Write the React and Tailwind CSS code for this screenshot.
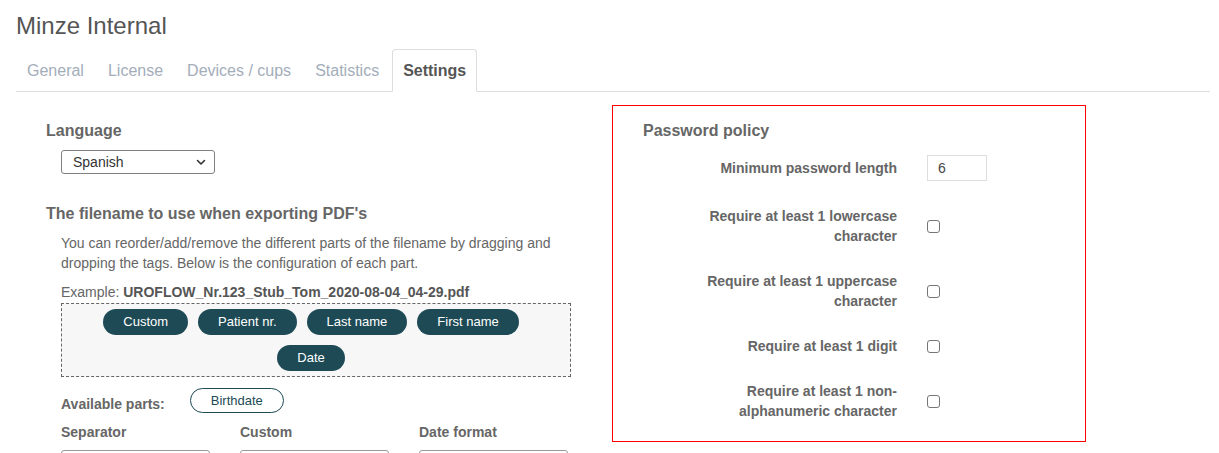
import React from 'react';

const tabs = ['General', 'License', 'Devices / cups', 'Statistics', 'Settings'];
const fileParts = ['Custom', 'Patient nr.', 'Last name', 'First name', 'Date'];

const policyRows = [
  { label: 'Require at least 1 lowercase character' },
  { label: 'Require at least 1 uppercase character' },
  { label: 'Require at least 1 digit' },
  { label: 'Require at least 1 non-alphanumeric character' },
];

const Checkbox = () => (
  <div className="w-[13px] h-[13px] rounded-[3px] border border-[#767676] bg-white" />
);

const App = () => {
  return (
    <div className="min-h-screen bg-white pl-4 pr-[9px] font-['Liberation_Sans',Arial,sans-serif] text-[#666]">
      {/* Page title */}
      <h1 className="pt-[12px] text-[24px] leading-[28px] font-light text-[#555]">Minze Internal</h1>

      {/* Tabs */}
      <div className="mt-[9px] flex border-b border-[#ddd]">
        {tabs.map(tab => {
          const active = tab === 'Settings';
          return (
            <div
              key={tab}
              className={`mr-[2px] px-[10px] py-[10px] text-[16px] leading-[21px] border rounded-t-[4px] -mb-px ${
                active
                  ? 'border-[#ddd] border-b-white bg-white font-bold text-[#555]'
                  : 'border-transparent text-[#a3adba]'
              }`}
            >
              {tab}
            </div>
          );
        })}
      </div>

      <div className="grid grid-cols-[596px_1fr]">
        {/* Left column: language + PDF filename */}
        <div className="pt-[29px] pl-[30px]">
          <h2 className="text-[16px] leading-5 font-bold text-[#666]">Language</h2>
          <div className="mt-[9px] ml-[15px] flex h-[24px] w-[154px] items-center justify-between rounded-[3px] border border-[#808080] pl-[11px] pr-[8px] text-[14px] text-[#333]">
            <span>Spanish</span>
            <svg width="10" height="10" viewBox="0 0 10 10" fill="none">
              <path d="M1.5 3.5 L5 7 L8.5 3.5" stroke="#333" strokeWidth="1.6" strokeLinecap="round" strokeLinejoin="round" />
            </svg>
          </div>

          <h2 className="mt-[30px] text-[16px] leading-5 font-bold text-[#666]">The filename to use when exporting PDF's</h2>
          <div className="ml-[15px]">
            <p className="mt-[9px] text-[14px] leading-5 text-[#666]">
              You can reorder/add/remove the different parts of the filename by dragging and
              <br />
              dropping the tags. Below is the configuration of each part.
            </p>
            <p className="mt-[9px] text-[14px] leading-5 text-[#666]">
              Example: <span className="font-bold text-[#555]">UROFLOW_Nr.123_Stub_Tom_2020-08-04_04-29.pdf</span>
            </p>

            <div className="mt-px flex h-[74px] w-[510px] flex-wrap content-start justify-center border border-dashed border-[#666] bg-[#f7f7f7] pr-[10px]">
              {fileParts.map(part => (
                <div
                  key={part}
                  className="m-[5px] flex h-[26px] items-center rounded-full bg-[#1d4a55] px-5 text-[13px] text-white"
                >
                  {part}
                </div>
              ))}
            </div>

            <div className="mt-[10px] flex items-start">
              <span className="pt-[7px] text-[14px] leading-5 font-bold text-[#666]">Available parts:</span>
              <div className="ml-[25px] mt-px flex h-[25px] items-center rounded-full border border-[#1d4a55] px-5 text-[13px] text-[#1d4a55]">
                Birthdate
              </div>
            </div>

            <div className="mt-[8px] grid grid-cols-[179px_179px_179px]">
              {['Separator', 'Custom', 'Date format'].map(label => (
                <div key={label}>
                  <div className="text-[14px] leading-5 font-bold text-[#666]">{label}</div>
                  <div className="mt-[8px] h-[30px] w-[149px] rounded-[3px] border border-[#999] bg-white" />
                </div>
              ))}
            </div>
          </div>
        </div>

        {/* Right column: password policy */}
        <div className="pt-[13px]">
          <div className="w-[474px] border border-[#ff0000] pt-[15px] pb-[20px] pl-[30px]">
            <h2 className="text-[16px] leading-5 font-bold text-[#666]">Password policy</h2>
            <div className="mt-[14px] flex flex-col gap-[25px]">
              <div className="flex items-center">
                <label className="ml-[44px] w-[210px] text-right text-[14px] leading-5 font-bold text-[#666]">
                  Minimum password length
                </label>
                <div className="ml-[30px] flex h-[26px] w-[60px] items-center border border-[#ddd] pl-[10px] text-[14px] text-[#444]">
                  6
                </div>
              </div>
              {policyRows.map(row => (
                <div key={row.label} className="flex items-center">
                  <label className="ml-[44px] w-[210px] text-right text-[14px] leading-5 font-bold text-[#666]">
                    {row.label}
                  </label>
                  <div className="ml-[30px]">
                    <Checkbox />
                  </div>
                </div>
              ))}
            </div>
          </div>
        </div>
      </div>
    </div>
  );
};

export default App;
